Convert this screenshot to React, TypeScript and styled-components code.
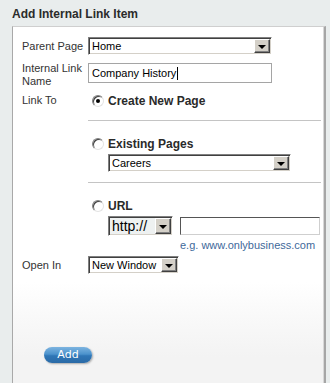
import React from 'react';
import styled, {createGlobalStyle} from 'styled-components';

const GlobalStyle = createGlobalStyle`
    html, body {
        margin: 0;
        padding: 0;
        background: #e9eded;
    }
    body {
        font-family: "Liberation Sans", Arial, sans-serif;
        font-size: 11px;
        color: #333333;
    }
`;

const Page = styled.div`
    width: 330px;
    height: 383px;
    overflow: hidden;
    background: #e9eded;
`;

const Title = styled.h1`
    margin: 0;
    padding: 7px 12px 5px;
    font-size: 12px;
    line-height: 14px;
    font-weight: bold;
    color: #2b2b2b;
`;

const Panel = styled.div`
    box-sizing: border-box;
    margin-left: 12px;
    width: 314px;
    height: 380px;
    padding: 10px 0 0 9px;
    border: 1px solid #cfcfcf;
    border-left-color: #a9a9a9;
    border-right: 2px solid #a6a6a6;
    box-shadow: inset -1px 0 0 #d8d8d8;
    background: linear-gradient(to bottom, #ffffff 0, #ffffff 255px, #f9f9f9 290px, #f3f3f3 330px, #f3f3f3 100%);
`;

const Row = styled.div<{$top?: number; $align?: string}>`
    display: flex;
    align-items: ${(p) => p.$align || 'center'};
    margin-top: ${(p) => p.$top || 0}px;
`;

const Label = styled.div<{$offset?: number}>`
    width: 66px;
    flex: none;
    line-height: 13px;
    margin-top: ${(p) => p.$offset || 0}px;
    color: #333333;
`;

const SelectBox = styled.div<{$width: number; $height?: number; $bg?: string; $size?: number}>`
    box-sizing: border-box;
    display: flex;
    align-items: stretch;
    width: ${(p) => p.$width}px;
    height: ${(p) => p.$height || 18}px;
    border: 1px solid;
    border-color: #808080 #ffffff #ffffff #808080;
    box-shadow: inset 1px 1px 0 #404040, inset -1px -1px 0 #d4d0c8;
    background: ${(p) => p.$bg || '#ffffff'};
    font-size: ${(p) => p.$size || 11}px;
    color: #000000;
`;

const SelectValue = styled.span`
    flex: 1;
    display: flex;
    align-items: center;
    padding-left: 3px;
    white-space: nowrap;
    overflow: hidden;
`;

const ArrowButton = styled.span`
    box-sizing: border-box;
    flex: none;
    width: 16px;
    margin: 1px;
    display: flex;
    align-items: center;
    justify-content: center;
    background: #d4d0c8;
    border: 1px solid;
    border-color: #ffffff #404040 #404040 #ffffff;
    box-shadow: inset -1px -1px 0 #808080;

    &::after {
        content: '';
        width: 0;
        height: 0;
        border-left: 4px solid transparent;
        border-right: 4px solid transparent;
        border-top: 4px solid #000000;
        margin-top: 1px;
    }
`;

const TextInput = styled.div<{$width: number; $height: number; $inset?: boolean}>`
    box-sizing: border-box;
    display: flex;
    align-items: center;
    width: ${(p) => p.$width}px;
    height: ${(p) => p.$height}px;
    padding-left: 3px;
    border: 1px solid #a5a5a5;
    ${(p) => (p.$inset ? 'border-color: #555555 #cfcfcf #cfcfcf #555555;' : '')}
    background: #ffffff;
    font-size: 11px;
    color: #000000;
`;

const Caret = styled.span`
    display: inline-block;
    width: 1px;
    height: 13px;
    margin-left: 1px;
    background: #000000;
`;

const Options = styled.div`
    display: flex;
    flex-direction: column;
    width: 233px;
`;

const RadioLine = styled.label<{$top?: number}>`
    display: flex;
    align-items: center;
    gap: 4px;
    height: 14px;
    padding-left: 4px;
    margin-top: ${(p) => p.$top || 0}px;
    font-size: 12px;
    font-weight: bold;
    color: #2a2a2a;
`;

const Radio = styled.span<{$checked?: boolean}>`
    box-sizing: border-box;
    position: relative;
    width: 12px;
    height: 12px;
    border-radius: 50%;
    border: 1px solid;
    border-color: #808080 #e4e4e4 #e4e4e4 #808080;
    box-shadow: inset 1px 1px 0 #404040;
    background: #ffffff;

    &::after {
        content: '';
        display: ${(p) => (p.$checked ? 'block' : 'none')};
        position: absolute;
        left: 3px;
        top: 3px;
        width: 4px;
        height: 4px;
        border-radius: 50%;
        background: #000000;
    }
`;

const Separator = styled.div<{$top: number}>`
    height: 1px;
    margin-top: ${(p) => p.$top}px;
    background: #c4c4c4;
`;

const SubRow = styled.div<{$top?: number}>`
    display: flex;
    align-items: center;
    gap: 7px;
    margin-left: 20px;
    margin-top: ${(p) => p.$top || 3}px;
`;

const Hint = styled.div`
    margin: 3px 0 0 92px;
    line-height: 13px;
    font-size: 11px;
    color: #41699a;
`;

const AddButton = styled.button`
    box-sizing: border-box;
    display: block;
    width: 48px;
    height: 16px;
    margin: 73px 0 0 22px;
    padding: 0;
    border: none;
    border-radius: 8px;
    background: linear-gradient(to bottom, #7db4e0 0%, #4b92cc 45%, #2f76b6 55%, #2a6aa6 100%);
    box-shadow: 1px 1px 2px rgba(0, 0, 0, 0.3);
    color: #ffffff;
    font-family: "DejaVu Sans", Verdana, sans-serif;
    font-size: 11px;
    line-height: 16px;
    cursor: pointer;
`;

function Select({width, value, height, bg, size}: {width: number; value: string; height?: number; bg?: string; size?: number}) {
    return (
        <SelectBox $width={width} $height={height} $bg={bg} $size={size}>
            <SelectValue>{value}</SelectValue>
            <ArrowButton />
        </SelectBox>
    );
}

export default function App() {
    return (
        <Page>
            <GlobalStyle />
            <Title>Add Internal Link Item</Title>
            <Panel>
                <Row>
                    <Label>Parent Page</Label>
                    <Select width={184} value="Home" />
                </Row>
                <Row $top={8} $align="flex-start">
                    <Label $offset={-1}>
                        Internal Link
                        <br />
                        Name
                    </Label>
                    <TextInput $width={184} $height={20}>
                        Company History
                        <Caret />
                    </TextInput>
                </Row>
                <Row $top={6} $align="flex-start">
                    <Label>Link To</Label>
                    <Options>
                        <RadioLine>
                            <Radio $checked />
                            Create New Page
                        </RadioLine>
                        <Separator $top={12} />
                        <RadioLine $top={16}>
                            <Radio />
                            Existing Pages
                        </RadioLine>
                        <SubRow>
                            <Select width={183} value="Careers" />
                        </SubRow>
                        <Separator $top={10} />
                        <RadioLine $top={16}>
                            <Radio />
                            URL
                        </RadioLine>
                        <SubRow>
                            <Select width={65} height={20} value="http://" bg="#eef1f1" size={14} />
                            <TextInput $width={140} $height={18} $inset />
                        </SubRow>
                        <Hint>e.g. www.onlybusiness.com</Hint>
                    </Options>
                </Row>
                <Row $top={4}>
                    <Label>Open In</Label>
                    <Select width={91} value="New Window" />
                </Row>
                <AddButton>Add</AddButton>
            </Panel>
        </Page>
    );
}
